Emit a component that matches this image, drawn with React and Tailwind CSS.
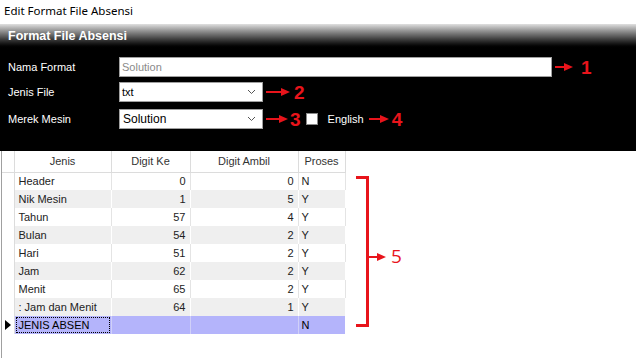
import React from "react";

const rows = [
  { jenis: "Header", ke: "0", ambil: "0", proses: "N" },
  { jenis: "Nik Mesin", ke: "1", ambil: "5", proses: "Y" },
  { jenis: "Tahun", ke: "57", ambil: "4", proses: "Y" },
  { jenis: "Bulan", ke: "54", ambil: "2", proses: "Y" },
  { jenis: "Hari", ke: "51", ambil: "2", proses: "Y" },
  { jenis: "Jam", ke: "62", ambil: "2", proses: "Y" },
  { jenis: "Menit", ke: "65", ambil: "2", proses: "Y" },
  { jenis: ": Jam dan Menit", ke: "64", ambil: "1", proses: "Y" },
];

function Arrow({ w = 18 }) {
  return (
    <svg width={w} height="10" viewBox={`0 0 ${w} 10`} className="shrink-0">
      <polygon points={`0,4 ${w - 9},4 ${w - 9},1 ${w},5 ${w - 9},9 ${w - 9},6 0,6`} fill="#e8141b" />
    </svg>
  );
}

function Num({ n }) {
  return <span className="text-[#e8141b] text-[19px] font-bold leading-none">{n}</span>;
}

function Chevron() {
  return (
    <svg width="9" height="6" viewBox="0 0 9 6" className="mr-[6px]">
      <polyline points="1,1 4.5,4.5 8,1" fill="none" stroke="#555" strokeWidth="1" />
    </svg>
  );
}

export default function App() {
  return (
    <div className="w-[636px] h-[358px] bg-white overflow-hidden relative" style={{ fontFamily: "'Liberation Sans', Arial, sans-serif" }}>
      <div className="h-[24px] pl-[4px] pt-[5px] text-[11.5px] text-black leading-none" style={{ fontFamily: "'Noto Sans', sans-serif" }}>
        Edit Format File Absensi
      </div>
      <div className="h-[25px] pl-[8px] pt-[6px] bg-gradient-to-b from-[#e0e0e0] via-[#5a5a5a] to-black text-white font-bold text-[12.5px] leading-none">
        Format File Absensi
      </div>
      <div className="bg-black h-[102px] text-white text-[11px] pt-[8px]">
        <div className="flex items-center h-[20px]">
          <span className="w-[119px] pl-[8px]">Nama Format</span>
          <div className="w-[433px] h-[20px] bg-white border border-[#a0a0a0] flex items-center pl-[2px] text-[#8a8a8a]">Solution</div>
          <span className="ml-[3px] mr-[8px]"><Arrow w={18} /></span>
          <Num n="1" />
        </div>
        <div className="flex items-center h-[20px] mt-[5px]">
          <span className="w-[119px] pl-[8px]">Jenis File</span>
          <div className="w-[144px] h-[20px] bg-white border border-[#a0a0a0] flex items-center justify-between pl-[2px] text-black">
            <span>txt</span>
            <Chevron />
          </div>
          <span className="ml-[3px] mr-[4px]"><Arrow w={24} /></span>
          <Num n="2" />
        </div>
        <div className="flex items-center h-[20px] mt-[7px]">
          <span className="w-[119px] pl-[8px]">Merek Mesin</span>
          <div className="w-[144px] h-[20px] bg-white border border-[#a0a0a0] flex items-center justify-between pl-[3px] text-black text-[12px]">
            <span>Solution</span>
            <Chevron />
          </div>
          <span className="ml-[3px] mr-[2px]"><Arrow w={22} /></span>
          <Num n="3" />
          <span className="ml-[5px] w-[12px] h-[12px] bg-white border border-[#888]" />
          <span className="ml-[10px] text-[11px]">English</span>
          <span className="ml-[5px] mr-[3px]"><Arrow w={20} /></span>
          <Num n="4" />
        </div>
      </div>
      <div className="border-l border-[#a0a0a0] ml-[1px] h-[207px] text-[11px] text-[#222]">
        <table className="border-collapse table-fixed" style={{ width: 343 }}>
          <colgroup>
            <col style={{ width: 12 }} />
            <col style={{ width: 97 }} />
            <col style={{ width: 79 }} />
            <col style={{ width: 108 }} />
            <col style={{ width: 47 }} />
          </colgroup>
          <thead>
            <tr className="h-[21px] text-[#333]">
              <th className="border-r border-b border-[#dcdcdc] font-normal" />
              <th className="border-r border-b border-[#dcdcdc] font-normal text-center">Jenis</th>
              <th className="border-r border-b border-[#dcdcdc] font-normal text-center">Digit Ke</th>
              <th className="border-r border-b border-[#dcdcdc] font-normal text-center">Digit Ambil</th>
              <th className="border-r border-b border-[#dcdcdc] font-normal text-center">Proses</th>
            </tr>
          </thead>
          <tbody>
            {rows.map((r, i) => (
              <tr key={r.jenis} className={i % 2 === 1 ? "h-[18px] bg-[#efefef]" : "h-[18px] bg-white"}>
                <td className="border-r border-[#dcdcdc] bg-white" />
                <td className={i % 2 === 1 ? "border-r border-white px-[4px]" : "border-r border-[#e4e4e4] px-[4px]"}>{r.jenis}</td>
                <td className={i % 2 === 1 ? "border-r border-white px-[4px] text-right" : "border-r border-[#e4e4e4] px-[4px] text-right"}>{r.ke}</td>
                <td className={i % 2 === 1 ? "border-r border-white px-[4px] text-right" : "border-r border-[#e4e4e4] px-[4px] text-right"}>{r.ambil}</td>
                <td className={i % 2 === 1 ? "border-r border-white px-[3px]" : "border-r border-[#e4e4e4] px-[3px]"}>{r.proses}</td>
              </tr>
            ))}
            <tr className="h-[18px] bg-[#b4b4fb]">
              <td className="bg-white border-r border-[#dcdcdc]">
                <svg width="7" height="10" viewBox="0 0 7 10" className="ml-[3px]">
                  <polygon points="0,0 6,5 0,10" fill="#000" />
                </svg>
              </td>
              <td className="border-r border-[#d0d0f8] px-[1px]">
                <span className="block border border-dotted border-black px-[2px] leading-[14px] text-black">JENIS ABSEN</span>
              </td>
              <td className="border-r border-[#d0d0f8]" />
              <td className="border-r border-[#d0d0f8]" />
              <td className="px-[3px] text-black">N</td>
            </tr>
          </tbody>
        </table>
      </div>
      <div className="absolute left-[356px] top-[176px] w-[13px] h-[151px] border-t-[3px] border-b-[3px] border-r-[3px] border-[#e8141b]" />
      <div className="absolute left-[369px] top-[247px] flex items-center">
        <Arrow w={17} />
        <span className="ml-[5px] text-[#e8141b] text-[19px] leading-none" style={{ fontFamily: "'Open Sans', sans-serif" }}>5</span>
      </div>
    </div>
  );
}
